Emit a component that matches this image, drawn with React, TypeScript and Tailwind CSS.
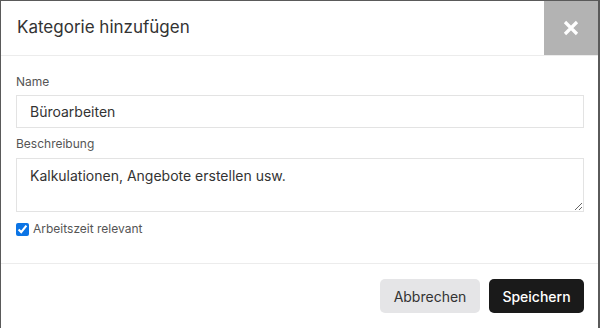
import React, { useState } from 'react';

const App = () => {
  const [name, setName] = useState('Büroarbeiten');
  const [desc, setDesc] = useState('Kalkulationen, Angebote erstellen usw.');
  const [relevant, setRelevant] = useState(true);

  return (
    <div className="w-[600px] h-[328px] bg-[#5a5a5a] pt-px pl-px pr-[2px] overflow-hidden" style={{ fontFamily: 'Inter, "Noto Sans", sans-serif' }}>
      <div className="h-full bg-white flex flex-col">
        {/* Header */}
        <div className="flex h-[55px] border-b border-[#ececec]">
          <h2 className="flex-1 pl-4 flex items-center text-[17px] text-[#333]">Kategorie hinzufügen</h2>
          <button className="w-[54px] bg-[#b3b3b3] flex items-center justify-center">
            <svg width="18" height="18" viewBox="0 0 18 18">
              <path d="M3 3 L15 15 M15 3 L3 15" stroke="white" strokeWidth="3.2" strokeLinecap="butt" />
            </svg>
          </button>
        </div>

        {/* Body */}
        <div className="px-[15px] pt-[18px] pb-[26px] border-b border-[#ececec]">
          <label className="block text-[12px] text-[#555] leading-4 mb-[5px]">Name</label>
          <input
            value={name}
            onChange={(e) => setName(e.target.value)}
            className="block w-[568px] h-[33px] border border-[#e3e3e3] px-[13px] text-[14px] text-[#333] outline-none"
          />
          <label className="block text-[12px] text-[#555] leading-4 mt-[8px] mb-[6px]">Beschreibung</label>
          <textarea
            value={desc}
            onChange={(e) => setDesc(e.target.value)}
            className="block w-[568px] h-[54px] border border-[#e3e3e3] px-[13px] pt-[6px] text-[14px] text-[#333] outline-none resize-y"
          />
          <label className="flex items-center gap-[4px] mt-[9px] text-[12px] text-[#555] leading-4">
            <input
              type="checkbox"
              checked={relevant}
              onChange={(e) => setRelevant(e.target.checked)}
              className="w-[13px] h-[13px] m-0 accent-[#0b74e5]"
            />
            Arbeitszeit relevant
          </label>
        </div>

        {/* Footer */}
        <div className="flex justify-end gap-[9px] pr-[14px] pt-[15px]">
          <button className="w-[100px] h-[34px] rounded-[5px] bg-[#e5e5e7] text-[14px] text-[#333]">Abbrechen</button>
          <button className="w-[95px] h-[34px] rounded-[5px] bg-[#1a1a1a] text-[14px] text-white font-medium">Speichern</button>
        </div>
      </div>
    </div>
  );
};

export default App;
